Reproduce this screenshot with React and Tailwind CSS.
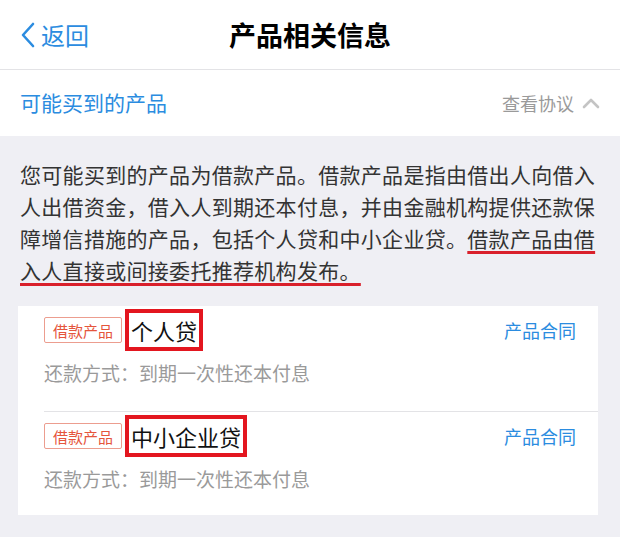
import React from "react";

function Row({ name }) {
  return (
    <div className="flex flex-col">
      <div className="flex items-center justify-between h-[46px] pt-[2px]">
        <div className="flex items-center">
          <span className="h-[26px] px-[8px] flex items-center border border-[#ec9d8f] rounded-[2px] text-[15px] leading-none text-[#e5553c]">
            借款产品
          </span>
          <span className="ml-[3px] border-[4px] border-[#e3161f] px-[2px] text-[22px] leading-[34px] text-[#111]">
            {name}
          </span>
        </div>
        <span className="mr-[22px] text-[18px] text-[#2b8ce0]">产品合同</span>
      </div>
      <div className="h-[42px] flex items-center text-[19px] text-[#9a9a9a]">
        还款方式：到期一次性还本付息
      </div>
    </div>
  );
}

export default function App() {
  return (
    <div
      className="w-[620px] h-[537px] bg-[#efeff4] overflow-hidden"
      style={{ fontFamily: '"Noto Sans CJK SC", "Noto Sans", sans-serif' }}
    >
      <div className="h-[70px] bg-white border-b border-[#e3e3e6] grid grid-cols-[1fr_auto_1fr] items-center">
        <div className="flex items-center pl-[20px] text-[#2b8ce0]">
          <svg width="16" height="26" viewBox="0 0 16 26" fill="none">
            <path d="M13 2 L3 13 L13 24" stroke="#2b8ce0" strokeWidth="2.6" strokeLinecap="round" strokeLinejoin="round" />
          </svg>
          <span className="ml-[5px] text-[24px] leading-none">返回</span>
        </div>
        <div className="text-[27px] font-semibold text-black leading-none">产品相关信息</div>
        <div />
      </div>
      <div className="h-[66px] bg-white flex items-center justify-between pl-[20px] pr-[20px]">
        <span className="text-[21px] text-[#2b8ce0]">可能买到的产品</span>
        <div className="flex items-center">
          <span className="text-[18px] text-[#9a9a9a]">查看协议</span>
          <svg className="ml-[8px]" width="18" height="12" viewBox="0 0 18 12" fill="none">
            <path d="M2 10 L9 3 L16 10" stroke="#c4c4c4" strokeWidth="2.6" strokeLinecap="round" strokeLinejoin="round" />
          </svg>
        </div>
      </div>
      <div className="px-[20px] pt-[22px] text-[21px] leading-[32px] tracking-[0.3px] text-[#333]">
        您可能买到的产品为借款产品。借款产品是指由借出人向借入
        <br />
        人出借资金，借入人到期还本付息，并由金融机构提供还款保
        <br />
        障增信措施的产品，包括个人贷和中小企业贷。
        <span className="underline decoration-[#d9202b] decoration-[3px] underline-offset-[4px]">
          借款产品由借
          <br />
          入人直接或间接委托推荐机构发布。
        </span>
      </div>
      <div className="mt-[20px] mx-[18px] w-[580px] bg-white pl-[26px]">
        <Row name="个人贷" />
        <div className="h-px bg-[#e3e3e6] mt-[17px]" />
        <Row name="中小企业贷" />
        <div className="h-[15px]" />
      </div>
    </div>
  );
}
